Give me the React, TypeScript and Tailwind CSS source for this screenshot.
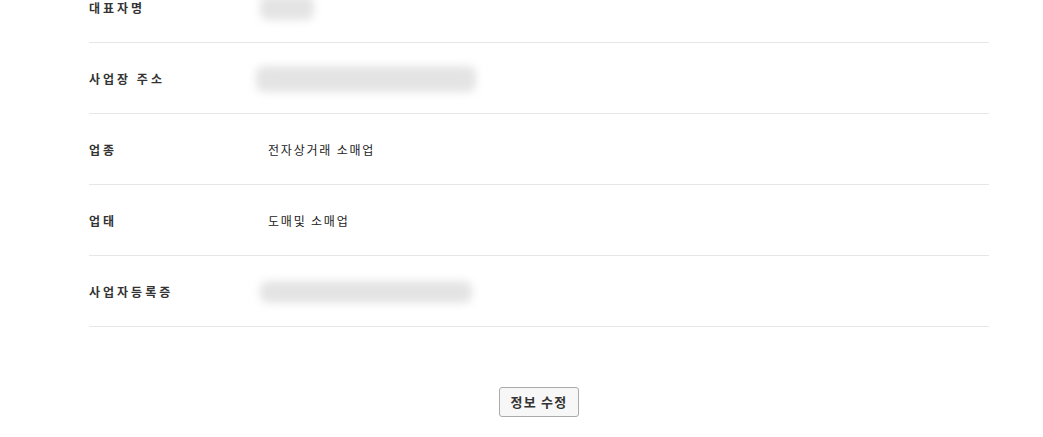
import React from "react";

const font = { fontFamily: '"Noto Sans CJK KR", "Noto Sans", sans-serif' };

function Blur({ w, h }: { w: number; h: number }) {
  return (
    <div className="relative" style={{ width: w, height: h }}>
      <div className="absolute inset-0 rounded-lg bg-[#e4e4e4] blur-[4px]" />
    </div>
  );
}

function Row({ label, children }: { label: string; children: React.ReactNode }) {
  return (
    <div className="flex h-[71px] items-center border-b border-[#e6e6e6]">
      <div className="w-[171px] shrink-0 pt-[1px] text-[12px] font-bold tracking-[3px] text-[#333]">{label}</div>
      <div className="flex items-center pt-[2px] text-[12px] tracking-[1.8px] text-[#222]">{children}</div>
    </div>
  );
}

export default function App() {
  return (
    <div className="min-h-[437px] bg-white" style={font}>
      <div className="mx-[89px] mt-[-28px] w-[900px]">
        <Row label="대표자명">
          <Blur w={54} h={24} />
        </Row>
        <Row label="사업장 주소">
          <div className="-ml-[4px]"><Blur w={220} h={26} /></div>
        </Row>
        <Row label="업종">
          <span className="ml-[8px]">전자상거래 소매업</span>
        </Row>
        <Row label="업태">
          <span className="ml-[8px]">도매및 소매업</span>
        </Row>
        <Row label="사업자등록증">
          <Blur w={212} h={22} />
        </Row>
      </div>
      <div className="mt-[60px] flex justify-center">
        <button className="ml-[35px] h-[30px] w-[80px] rounded-[3px] border border-[#aaa] bg-[#f7f7f7] text-[13px] font-bold tracking-[1.2px] text-[#333]">
          정보 수정
        </button>
      </div>
    </div>
  );
}
